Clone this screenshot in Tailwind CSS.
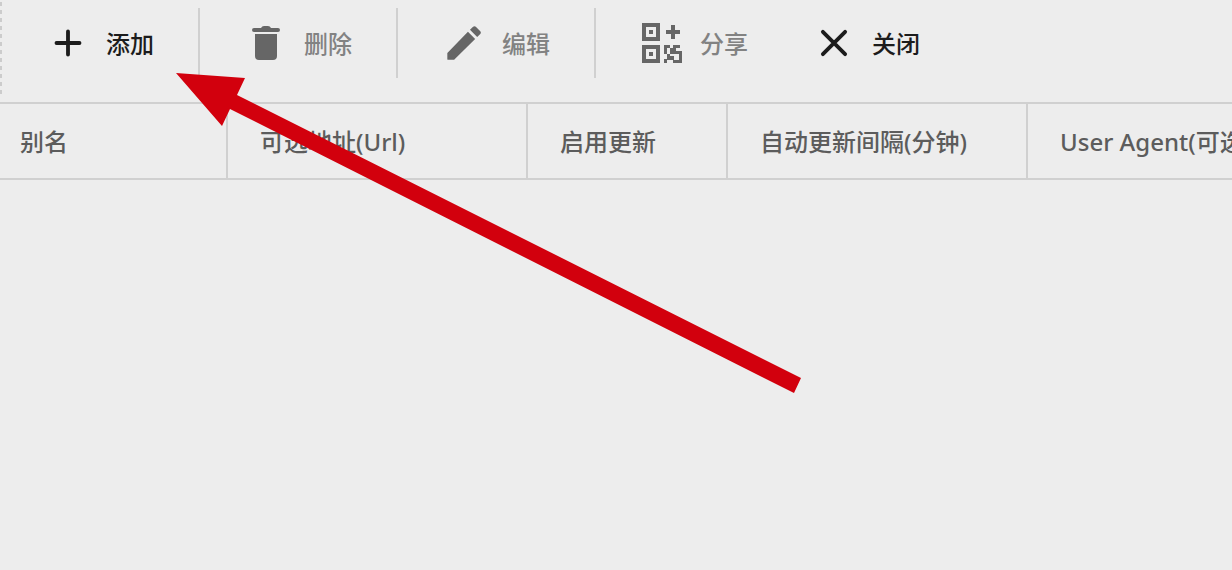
<!DOCTYPE html>
<html lang="zh-CN">
<head>
<meta charset="utf-8">
<meta name="viewport" content="width=device-width, initial-scale=1">
<title>订阅分组设置</title>
<script src="https://cdn.jsdelivr.net/npm/@tailwindcss/browser@4"></script>
</head>
<body class="relative min-h-screen overflow-hidden bg-[#ededed] text-2xl font-medium text-[#5c5c5c] font-['Noto_Sans','Noto_Sans_CJK_SC',sans-serif]">
  <div role="toolbar" class="flex h-[102px] items-start pt-2">
    <div class="-mt-2 h-24 w-[2px] shrink-0 bg-[repeating-linear-gradient(to_bottom,transparent_0px_2px,#cccccc_2px_6px,transparent_6px_8px)]"></div>
    <button class="flex h-[70px] w-[198px] shrink-0 items-center gap-[15px] border-r-2 border-[#d0d0d0] pl-[43px] text-[#1c1c1c]">
      <svg class="size-[46px] shrink-0" viewBox="0 0 24 24" fill="none" stroke="currentColor" stroke-width="2" stroke-linecap="round" aria-hidden="true"><path d="M12 6v12M6 12h12"/></svg>
      <span class="pt-0.5">添加</span>
    </button>
    <button class="flex h-[70px] w-[198px] shrink-0 items-center gap-[15px] border-r-2 border-[#d0d0d0] pl-[43px] text-[#828282]">
      <svg class="size-[46px] shrink-0" viewBox="0 0 46 46" fill="#666666" aria-hidden="true"><path d="M12 14h22v22q0 4-4 4H16q-4 0-4-4zM11 8h7q1-2 3-2h4q2 0 3 2h7q2 0 2 2t-2 2H11q-2 0-2-2t2-2z"/></svg>
      <span class="pt-0.5">删除</span>
    </button>
    <button class="flex h-[70px] w-[198px] shrink-0 items-center gap-[15px] border-r-2 border-[#d0d0d0] pl-[43px] text-[#828282]">
      <svg class="size-[46px] shrink-0" viewBox="0 0 24 24" fill="#666666" aria-hidden="true"><path d="M3.300 17.250V20.300c0 .28.22.5.5.5h3.050L17.810 9.940l-3.750-3.750L3.300 17.250zM20.500 7.240c.39-.39.39-1.020 0-1.410l-2.340-2.340c-.39-.39-1.020-.39-1.410 0l-1.630 1.630 3.750 3.750 1.630-1.630z"/></svg>
      <span class="pt-0.5">编辑</span>
    </button>
    <button class="flex h-[70px] w-[172px] shrink-0 items-center gap-[15px] pl-[43px] text-[#828282]">
      <svg class="size-[46px] shrink-0" viewBox="0 0 46 46" fill="#666666" aria-hidden="true">
        <path fill-rule="evenodd" d="M3 3h18v18H3zM7 7v10h10V7zM10 10h4v4h-4zM3 25h18v18H3zM7 29v10h10V29zM10 32h4v4h-4z"/>
        <path d="M32 5h4v5h5v4h-5v5h-4v-5h-5v-4h5z"/>
        <path d="M25 25h6v3h-3v6h-3zM34 25h7v3h-4v3h-3v3h-3v3h-3v-3h3v-6h3zM34 31h9v12h-9v-3h6v-6h-6zM28 36h7v4h-7zM25 39h3v4h-3z"/>
      </svg>
      <span class="pt-0.5">分享</span>
    </button>
    <button class="flex h-[70px] w-[198px] shrink-0 items-center gap-[15px] pl-[43px] text-[#1c1c1c]">
      <svg class="size-[46px] shrink-0" viewBox="0 0 24 24" fill="none" stroke="currentColor" stroke-width="2" stroke-linecap="round" aria-hidden="true"><path d="M6.200 6.200l11.600 11.600M17.800 6.200L6.200 17.800"/></svg>
      <span class="pt-0.5">关闭</span>
    </button>
  </div>

  <div class="overflow-hidden">
  <table class="w-full min-w-[1260px] table-fixed border-separate border-spacing-0 border-y-2 border-[#d0d0d0] text-left">
    <thead>
      <tr class="h-[74px] whitespace-nowrap">
        <th scope="col" class="w-[228px] border-r-2 border-[#d0d0d0] pt-0.5 pl-5 font-medium">别名</th>
        <th scope="col" class="w-[300px] border-r-2 border-[#d0d0d0] pt-0.5 pl-8 font-medium">可选地址(Url)</th>
        <th scope="col" class="w-[200px] border-r-2 border-[#d0d0d0] pt-0.5 pl-8 font-medium">启用更新</th>
        <th scope="col" class="w-[300px] border-r-2 border-[#d0d0d0] pt-0.5 pl-8 font-medium">自动更新间隔(分钟)</th>
        <th scope="col" class="pt-0.5 pl-8 font-medium">User Agent(可选)</th>
      </tr>
    </thead>
  </table>
  </div>

  <svg class="pointer-events-none absolute top-0 left-0 h-[400px] w-[810px]" viewBox="0 0 810 400" fill="#d2000d" aria-hidden="true"><path d="M176 73l69 5-8 17 564 283-7 15-564-284-8 17z"/></svg>
</body>
</html>
